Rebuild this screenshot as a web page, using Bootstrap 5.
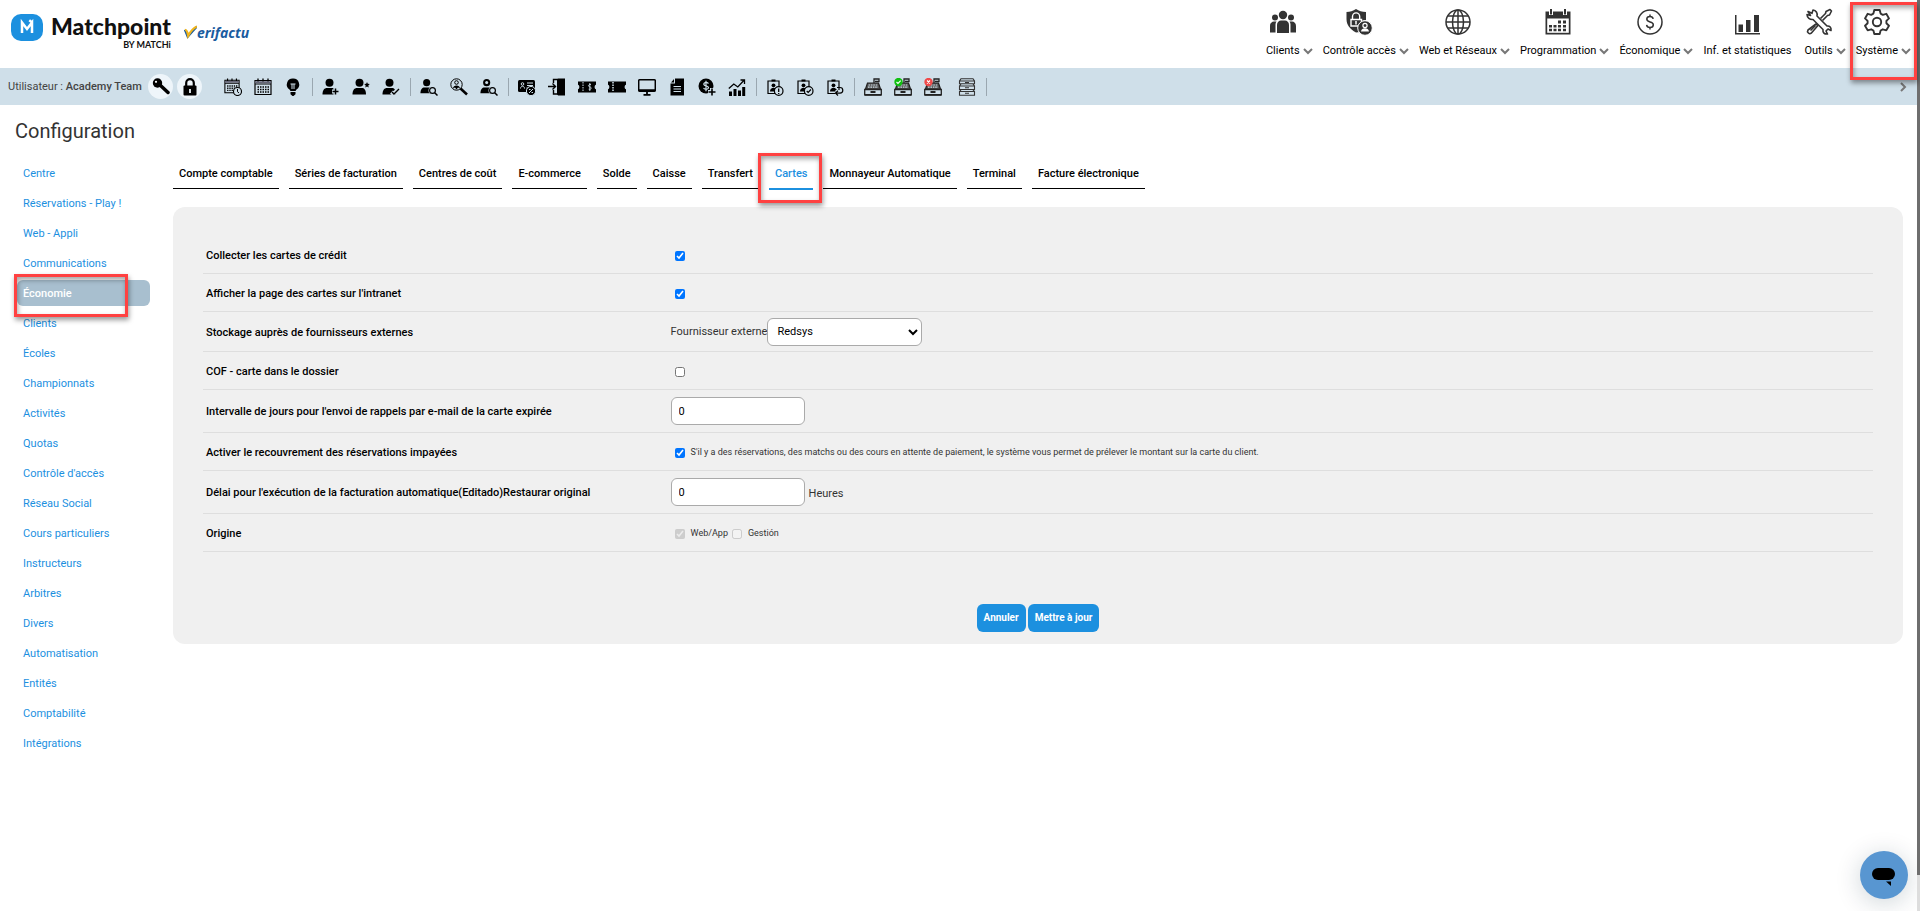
<!DOCTYPE html>
<html lang="fr">
<head>
<meta charset="utf-8">
<meta name="viewport" content="width=device-width, initial-scale=1">
<title>Matchpoint - Configuration</title>
<link href="https://cdn.jsdelivr.net/npm/bootstrap@5.3.0/dist/css/bootstrap.min.css" rel="stylesheet">
<style>
  :root { --mp-blue: #1c90df; --mp-bar: #cfdfe9; --mp-mark: #ff4141; }
  body { font-family: Roboto, "Liberation Sans", sans-serif; font-size: 11px; line-height: 16px; color: #333; background: #fff; min-height: 100vh; }
  a { text-decoration: none; }
  svg { display: block; }
  .icon-defs { position: absolute; width: 0; height: 0; }

  .top-header { height: 68px; padding: 0 9px 0 11px; }
  .brand-link { padding-top: 14px; }
  .brand-name { font: 900 23px/24px Lato, sans-serif; color: #111; }
  .brand-sub { font: 700 9px/10px Lato, sans-serif; color: #111; margin-top: 2px; }
  .verif { margin: 9px 0 0 13px; }
  .verif-word { font: italic 700 14px/20px "Open Sans", sans-serif; color: #1a5c9f; }
  .main-menu { gap: 10px; }
  .menu-entry { display: grid; grid-template-columns: auto auto; column-gap: 3px; justify-items: center; align-items: center; row-gap: 7px; color: #000; font-weight: 400; padding-top: 8px; white-space: nowrap; }
  .menu-entry .menu-icon { width: 28px; height: 28px; color: #333; grid-column: 1; grid-row: 1; }
  .menu-entry .menu-word { grid-column: 1; grid-row: 2; }
  .menu-entry .menu-chev { width: 10px; height: 7px; color: #777; grid-column: 2; grid-row: 2; }

  .tool-bar { height: 37px; background: var(--mp-bar); padding-left: 8px; padding-right: 8px; }
  .user-text { width: 136px; color: #444; white-space: nowrap; }
  .round-btn { width: 25px; height: 25px; border: 0; border-radius: 50%; background: #eef5fa; padding: 0; display: grid; place-items: center; color: #000; }
  .tool-btn { width: 30px; height: 24px; border: 0; background: none; padding: 0; display: grid; place-items: center; color: #000; }
  .tool-sep { width: 1px; height: 18px; margin: 0 3px 0 4px; background: #9aa7b0; }
  .tool-icon { width: 18px; height: 18px; }

  .page-title { font-size: 20px; line-height: 24px; font-weight: 400; color: #333; margin: 14px 0 0 15px; }
  .page-body { padding-top: 17px; }
  .side-menu { width: 150px; padding-left: 17px; gap: 4px; flex: none; }
  .side-menu .side-link { position: relative; height: 26px; padding: 6px 6px 4px; line-height: 16px; color: var(--mp-blue); border-radius: 6px; }
  .side-menu .side-link.active { background: #a8bfcf; color: #fff; font-weight: 500; }

  .main-area { margin: 0 17px 0 23px; min-width: 0; }
  .tab-strip { gap: 10px; padding-top: 6px; margin-bottom: 17px; }
  .tab-strip .tab-link { position: relative; height: 23px; padding: 0 6px; color: #000; font-weight: 500; border-bottom: 1px solid #000; white-space: nowrap; }
  .tab-strip .tab-link.active { color: var(--mp-blue); border-bottom: 2px solid var(--mp-blue); height: 24px; }

  .panel-box { background: #f0f0f0; border-radius: 12px; padding: 29px 30px 12px; }
  .set-row { min-height: 38px; border-bottom: 1px solid #dedede; }
  .set-row.mid { min-height: 40px; }
  .set-row.tall { min-height: 43px; }
  .set-label { width: 28%; padding: 2px 0 0 3px; color: #000; font-weight: 500; }
  .tick { width: 10px; height: 10px; margin: 3px 6px 0 4px; }
  .text-in { width: 134px; height: 28px; border: 1px solid #aaa; border-radius: 6px; padding: 0 7px; background: #fff; color: #000; font-size: 11px; }
  .pick { width: 155px; height: 28px; border: 1px solid #aaa; border-radius: 6px; padding: 0 5px; background: #fff; color: #000; font-size: 11px; }
  .note-text { font-size: 9px; }
  .act-btn { height: 28px; border: 0; border-radius: 6px; background: var(--mp-blue); color: #fff; font-size: 10px; font-weight: 700; padding: 0 7px; }
  .act-row { margin-top: 52px; gap: 2px; }

  .callout-box { position: absolute; border: 3px solid var(--mp-mark); box-shadow: 1px 3px 5px rgba(0,0,0,.4), inset 1px 3px 5px rgba(0,0,0,.35); pointer-events: none; z-index: 5; }
  .callout-sys { inset: 2px -6px -21px -6px; }
  .callout-side { inset: -6px 22px -11px -3px; }
  .callout-tab { inset: -13px -9px -15px -11px; }

  .chat-btn { position: fixed; right: 12px; bottom: 12px; width: 48px; height: 48px; border: 0; border-radius: 50%; background: #5896d1; padding: 0; box-shadow: 0 4px 26px rgba(0,40,60,.2); }
  .scroll-rail { position: fixed; top: 0; right: 0; bottom: 0; width: 3px; background: #ddd; z-index: 4; }
  .scroll-rail span { display: block; height: 96%; background: #6e6e6e; }
</style>
</head>
<body>
<svg class="icon-defs" aria-hidden="true">
  <defs>
    <symbol id="chev" viewBox="0 0 10 7"><path d="M1 1l4 4 4-4" fill="none" stroke="currentColor" stroke-width="2"/></symbol>
    <symbol id="m-clients" viewBox="0 0 28 28"><g fill="currentColor"><circle cx="14" cy="7" r="4.2"/><circle cx="6" cy="9.500" r="3"/><circle cx="22" cy="9.500" r="3"/><path d="M8 25v-8c0-3 2-4.500 4-4.500h4c2 0 4 1.500 4 4.500v8zM1 24.500V18c0-3 2-4.500 4-4.500h2.500C6.500 15 6.500 16 6.500 17v7.500zM27 24.500V18c0-3-2-4.500-4-4.500h-2.500c1 1.500 1 2.500 1 3.500v7.500z"/></g></symbol>
    <symbol id="m-access" viewBox="0 0 28 28"><path d="M11 1c3 2 6 3 10 3v8a7.500 7.500 0 0 0-6 12l-4 .5C5 21 1.500 17 1.500 11V4C5 4 8 3 11 1z" fill="currentColor"/><path d="M7.500 11V8.500a3.600 3.600 0 0 1 7.200 0V11M6 11.500h10.500V18H6z" fill="none" stroke="#fff" stroke-width="1.400"/><path d="M11 13v3.500" stroke="#fff" stroke-width="1.500"/><circle cx="20" cy="20" r="7.300" fill="currentColor" stroke="#fff"/><circle cx="20" cy="17.500" r="2.100" fill="none" stroke="#fff" stroke-width="1.200"/><path d="M16 23.500c.3-2.500 2-3.300 4-3.300s3.700.8 4 3.300z" fill="#fff"/></symbol>
    <symbol id="m-web" viewBox="0 0 28 28"><g fill="none" stroke="currentColor" stroke-width="1.500"><circle cx="14" cy="14" r="12"/><ellipse cx="14" cy="14" rx="5.500" ry="12"/><path d="M14 2v24M2 14h24M4 8h20M4 20h20"/></g></symbol>
    <symbol id="m-prog" viewBox="0 0 28 28"><path d="M1.500 3.500h25v23h-25z" fill="currentColor"/><path d="M3.200 10.500h21.600v14.300H3.200z" fill="#fff"/><path d="M7 1v6M21 1v6" stroke="#fff" stroke-width="4"/><path d="M7 1v5.500M21 1v5.500" stroke="currentColor" stroke-width="2"/><path d="M14 12.500h3v3h-3zM19 12.500h3v3h-3zM5 17h3v2.500H5zM9.500 17h3v2.500h-3zM14 17h3v2.500h-3zM19 17h3v2.500h-3zM5 20.700h3v2.500H5zM9.500 20.700h3v2.500h-3zM14 20.700h3v2.500h-3zM19 20.700h3v2.500h-3z" fill="currentColor"/></symbol>
    <symbol id="m-eco" viewBox="0 0 28 28"><g fill="none" stroke="currentColor" stroke-width="1.500"><circle cx="14" cy="14" r="12"/><path d="M17.200 10.800c-.3-1.500-1.500-2.300-3.200-2.300-2 0-3.200 1-3.200 2.600 0 3.900 6.500 1.800 6.500 5.600 0 1.700-1.300 2.800-3.300 2.800s-3.200-1-3.400-2.600M14 6.500v2M14 19.500v2"/></g></symbol>
    <symbol id="m-stat" viewBox="0 0 28 28"><g fill="currentColor"><path d="M2 7h1.500v18H27v1.500H2zM5.500 16.500H10V24H5.500zM13 12h4.500v12H13zM21 7h5v17h-5z"/></g></symbol>
    <symbol id="m-tools" viewBox="0 0 28 28"><g fill="none" stroke="currentColor" stroke-width="1.600" stroke-linejoin="round"><path d="M3 3.500l4 1.800 1-3.300c3 .5 4.700 3 4 6l10 10c2.700-.4 4.500 1.500 4 4.500l-3-1.500-2 2 1.500 3c-3 .4-5-1.400-4.500-4.500L8 11.500C5 12 2 9.500 2 6.500l3.500 1z"/><path d="M15.500 10.500l5-5 .5-2 4-2 1.500 1.500-2 4-2 .5-5 5M11 16l1.700 1.700-6.500 7.500c-1.800 1.500-4.700-1-3.200-3.200z"/><path d="M5.500 22.500l5-5"/></g></symbol>
    <symbol id="m-sys" viewBox="0 0 28 28"><g fill="none" stroke="currentColor" stroke-width="1.900" stroke-linejoin="round"><path d="M11.300 2h5.400l.9 3.600 2.200 1.200 3.500-1 2.700 4.600-2.600 2.500v2.300l2.600 2.500-2.700 4.600-3.500-1-2.200 1.200-.9 3.500h-5.400l-.9-3.500-2.200-1.200-3.500 1L2 17.700l2.600-2.500v-2.300L2 10.400l2.700-4.600 3.500 1 2.200-1.200z"/><circle cx="14" cy="14" r="4.200"/></g></symbol>

    <symbol id="t-key" viewBox="0 0 18 18"><circle cx="5.500" cy="5" r="4.700" fill="currentColor"/><path d="M8 7l8 7.500" stroke="currentColor" stroke-width="3.500" stroke-linecap="round"/><circle cx="4" cy="3.800" r="1.100" fill="#fff"/></symbol>
    <symbol id="t-lock" viewBox="0 0 18 18"><rect x="2.500" y="7.500" width="13" height="10" rx="1" fill="currentColor"/><path d="M5.200 8V5a3.800 3.800 0 0 1 7.600 0v3" fill="none" stroke="currentColor" stroke-width="2.200"/><path d="M9 11v4" stroke="#eef5fa" stroke-width="1.800"/></symbol>
    <symbol id="t-cal" viewBox="0 0 18 18"><path d="M1 2.500h16v14H1zM1 6h16" fill="none" stroke="currentColor" stroke-width="1.200"/><path d="M1 4.300h16" stroke="#667" stroke-width="2"/><path d="M4 .5v3M9 .5v3M14 .5v3" stroke="currentColor" stroke-width="1.300"/><path d="M3.500 9h11.500M3.500 11.500h11.500M3.500 14h11.500" stroke="currentColor" stroke-width="1.500" stroke-dasharray="1.500 1"/></symbol>
    <symbol id="t-calclock" viewBox="0 0 18 18"><use href="#t-cal" width="16" height="16"/><circle cx="13.500" cy="13.500" r="4" fill="#cfdfe9" stroke="currentColor" stroke-width="1.100"/><path d="M13.500 11v2.700l1.500 1.300" fill="none" stroke="currentColor"/></symbol>
    <symbol id="t-bulb" viewBox="0 0 18 18"><path d="M9 .5a6 6 0 0 1 3.500 11L11.500 13h-5l-1-1.500A6 6 0 0 1 9 .5zM6.500 14h5v2.200L9.500 18h-1l-2-1.800z" fill="currentColor"/><path d="M6.500 6h5M8 6v5M10 6v5" stroke="#cfdfe9" fill="none"/></symbol>
    <symbol id="t-person" viewBox="0 0 18 18"><circle cx="7.500" cy="4.700" r="4" fill="currentColor"/><path d="M.5 16.500c0-4.500 2-6.500 4.500-6.500h5c2 0 4 1.500 4 6.500z" fill="currentColor"/></symbol>
    <symbol id="t-add" viewBox="0 0 18 18"><use href="#t-person"/><path d="M13.500 10v7M10 13.500h7" stroke="#cfdfe9" stroke-width="4"/><path d="M13.500 10.500v6M10.500 13.500h6" stroke="currentColor" stroke-width="1.500"/></symbol>
    <symbol id="t-star" viewBox="0 0 18 18"><use href="#t-person"/><path d="M15 4l.8 1.800 2 .2-1.500 1.400.4 2L15 8.400l-1.700 1 .4-2L12.200 6l2-.2z" fill="currentColor"/></symbol>
    <symbol id="t-check" viewBox="0 0 18 18"><use href="#t-person"/><path d="M9.500 14l2 2 5-5" fill="none" stroke="#cfdfe9" stroke-width="4"/><path d="M10 14l2 2 5-5" fill="none" stroke="currentColor" stroke-width="1.400"/></symbol>
    <symbol id="t-psearch" viewBox="0 0 18 18"><use href="#t-person" width="16" height="17"/><circle cx="12.500" cy="12.500" r="4" fill="#cfdfe9"/><circle cx="12.500" cy="12.500" r="2.900" fill="#cfdfe9" stroke="currentColor" stroke-width="1.200"/><path d="M14.700 14.700l2.800 2.800" stroke="currentColor" stroke-width="1.500"/></symbol>
    <symbol id="t-psearch2" viewBox="0 0 18 18"><use href="#t-psearch"/><circle cx="6.700" cy="4.500" r="1.500" fill="#cfdfe9"/></symbol>
    <symbol id="t-mag" viewBox="0 0 18 18"><circle cx="6.500" cy="6.500" r="5.700" fill="none" stroke="currentColor"/><circle cx="6.500" cy="4.500" r="1.800" fill="none" stroke="currentColor"/><path d="M3 10.500c0-4 7-4 7 0l-2-1-1.500 2L5 9.500z" fill="currentColor"/><path d="M10.500 10.500l6.500 6" stroke="currentColor" stroke-width="2.500"/></symbol>
    <symbol id="t-card" viewBox="0 0 18 18"><rect x="0" y="2" width="17" height="12" rx="1.500" fill="currentColor"/><circle cx="4.500" cy="6" r="1.300" fill="none" stroke="#cfdfe9"/><path d="M2.500 10.500c0-3 4-3 4 0M9 5h6M9 7.500h6M8.500 10h3" stroke="#cfdfe9" fill="none"/><circle cx="13" cy="13" r="4.600" fill="currentColor" stroke="#cfdfe9"/><path d="M11 15l4-4M11 11.500h1.500M13.500 14.500H15" stroke="#cfdfe9"/></symbol>
    <symbol id="t-exit" viewBox="0 0 18 18"><path d="M10 .5h7v17h-7l-1-1.500V2z" fill="currentColor"/><path d="M10 1.500H5.500V5M5.500 12v4H10M0 8.500h7M4.500 5.500l3 3-3 3" fill="none" stroke="currentColor" stroke-width="1.400"/></symbol>
    <symbol id="t-tick1" viewBox="0 0 18 18"><path d="M0 3.500h18v3.300c-1.800.5-1.800 4 0 4.500v3.200H0v-3.200c1.800-.5 1.800-4 0-4.500z" fill="currentColor"/><path d="M5 4v10" stroke="#cfdfe9" stroke-dasharray="1.500 1"/><path d="M13 6.500c-3-.6-3 2-1.500 2.300 2.500.4 2.300 3-.8 2.400M11.800 5v8" stroke="#cfdfe9" fill="none" stroke-width=".9"/></symbol>
    <symbol id="t-tick2" viewBox="0 0 18 18"><path d="M0 3.500h18v3.300c-1.800.5-1.800 4 0 4.500v3.200H0v-3.200c1.800-.5 1.800-4 0-4.500z" fill="currentColor"/><path d="M5 4v10" stroke="#cfdfe9" stroke-width="1.500" stroke-dasharray="1.500 1"/></symbol>
    <symbol id="t-mon" viewBox="0 0 18 18"><rect x=".7" y="1.700" width="16.600" height="11.500" rx="1" fill="none" stroke="currentColor" stroke-width="1.500"/><path d="M1 12.200h16M9 13v3M5.500 16.800h7" stroke="currentColor" stroke-width="1.800"/></symbol>
    <symbol id="t-doc" viewBox="0 0 18 18"><path d="M7 .5h9v17H2.500V5.500H7zM6 1L3 4.500h3z" fill="currentColor"/><path d="M5.500 8.500h7.500M5.500 11h7.500M5.500 13.500h7.500" stroke="#cfdfe9"/></symbol>
    <symbol id="t-coin" viewBox="0 0 18 18"><circle cx="8" cy="8" r="7.500" fill="currentColor"/><path d="M10.500 5.500C8 3.500 5.500 4.700 5.800 6.300c.4 2 4.600 1 4.700 3.300 0 1.800-3 2.300-5 .7M8 2.800v10.400" stroke="#cfdfe9" fill="none" stroke-width="1.200"/><path d="M14 10v8M10 14h8" stroke="#cfdfe9" stroke-width="4"/><path d="M14 10.500v7M10.500 14h7" stroke="currentColor" stroke-width="1.600"/></symbol>
    <symbol id="t-graph" viewBox="0 0 18 18"><path d="M1 13.500h3V18H1zM5.500 11h3v7h-3zM10 12.500h3V18h-3zM14.200 9h3v9h-3z" fill="currentColor"/><path d="M.8 10.500l5-4.500 4 3 6-6.500M12.500 2H16.500v4" fill="none" stroke="currentColor" stroke-width="1.300"/></symbol>
    <symbol id="t-badge" viewBox="0 0 18 18"><path d="M2 3h11v12.500H2z" fill="none" stroke="currentColor" stroke-width="1.200"/><path d="M5.500 1.500h4v2h-4z" fill="currentColor"/><circle cx="7.500" cy="7.300" r="1.900" fill="currentColor"/><path d="M4 13.500c0-5 7-5 7 0z" fill="currentColor"/></symbol>
    <symbol id="t-b1" viewBox="0 0 18 18"><use href="#t-badge"/><circle cx="12.700" cy="13" r="4.300" fill="#cfdfe9" stroke="currentColor" stroke-width="1.200"/><path d="M12.700 10.500v3.500M12.700 15v1" stroke="currentColor" stroke-width="1.300"/></symbol>
    <symbol id="t-b2" viewBox="0 0 18 18"><use href="#t-badge"/><circle cx="12.700" cy="13" r="4.300" fill="#cfdfe9" stroke="currentColor" stroke-width="1.200"/><path d="M10.700 13l1.500 1.500 2.700-3" fill="none" stroke="currentColor" stroke-width="1.200"/></symbol>
    <symbol id="t-b3" viewBox="0 0 18 18"><use href="#t-badge"/><path d="M9.500 12h7v4h-7z" fill="#cfdfe9"/><path d="M11 9.500h3a2.800 2.800 0 0 1 0 5.600h-4M12 12.700l-2.500 2.400 2.500 2.400" fill="none" stroke="currentColor" stroke-width="1.200"/></symbol>
    <symbol id="t-cash" viewBox="0 0 18 18"><path d="M.7 11.500h16.600v5.300H.7z" fill="none" stroke="#222" stroke-width="1.300"/><path d="M1.500 11l2-6h11l2 6z" fill="#555" stroke="#222" stroke-width="1.200"/><path d="M10 5V1h5v2.500h-4" fill="none" stroke="#222" stroke-width="1.300"/><path d="M4.500 7h9M4 9.200h10" stroke="#cfdfe9" stroke-width="1.200" stroke-dasharray="1.600 .8"/><path d="M.7 16.800h16.600M6.500 14h5" stroke="#222" stroke-width="1.800"/></symbol>
    <symbol id="t-cashok" viewBox="0 0 18 18"><use href="#t-cash"/><circle cx="4.500" cy="4" r="4.200" fill="#10c010"/><path d="M2.500 4l1.500 1.500L6.700 2.700" fill="none" stroke="#fff" stroke-width="1.100"/></symbol>
    <symbol id="t-cashno" viewBox="0 0 18 18"><use href="#t-cash"/><circle cx="4.500" cy="4" r="4.200" fill="#f04a4a"/><path d="M3 2.500l3 3M6 2.500l-3 3" stroke="#fff" stroke-width="1.100"/></symbol>
    <symbol id="t-draw" viewBox="0 0 18 18"><g fill="none" stroke="#333" stroke-width="1.100"><path d="M3 .7h12L16.500 3v2.700h-15V3zM1.500 3h15M3 6l-1.500 2v3.500h15V8L15 6M1.500 8h15M3 11.800L1.500 13.500v3.800h15v-3.800L15 11.800M1.500 13.500h15"/><path d="M7 4.500h4M7 9.700h4M7 15.200h4"/></g></symbol>
  </defs>
</svg>

<header class="top-header d-flex justify-content-between">
  <a href="#" class="brand-link d-flex align-items-start" aria-label="Matchpoint by Matchi">
    <svg class="me-2" width="32" height="28" viewBox="0 0 32 28"><rect width="32" height="27" rx="10" fill="#1c90df"/><path d="M11 19V8.500l5 6.500 5-6.500V19M18.500 8L20 6" fill="none" stroke="#fff" stroke-width="2.500"/></svg>
    <span class="d-flex flex-column align-items-end"><span class="brand-name">Matchpoint</span><span class="brand-sub">BY MATCHi</span></span>
    <span class="verif d-flex">
      <svg width="13" height="17" viewBox="0 0 14 20" preserveAspectRatio="none"><path d="M1 8l3 8L14 4" fill="none" stroke="#1a5c9f" stroke-width="2.500"/><path d="M1 8c2 0 3 4 3.500 7C7 10 10 6 14 4" fill="none" stroke="#f0b41c" stroke-width="2.500"/></svg>
      <span class="verif-word">erifactu</span>
    </span>
  </a>
  <nav class="main-menu d-flex align-items-start" aria-label="Menu principal">
    <a href="#" class="menu-entry"><svg class="menu-icon"><use href="#m-clients"/></svg><span class="menu-word">Clients</span><svg class="menu-chev"><use href="#chev"/></svg></a>
    <a href="#" class="menu-entry"><svg class="menu-icon"><use href="#m-access"/></svg><span class="menu-word">Contrôle accès</span><svg class="menu-chev"><use href="#chev"/></svg></a>
    <a href="#" class="menu-entry"><svg class="menu-icon"><use href="#m-web"/></svg><span class="menu-word">Web et Réseaux</span><svg class="menu-chev"><use href="#chev"/></svg></a>
    <a href="#" class="menu-entry"><svg class="menu-icon"><use href="#m-prog"/></svg><span class="menu-word">Programmation</span><svg class="menu-chev"><use href="#chev"/></svg></a>
    <a href="#" class="menu-entry"><svg class="menu-icon"><use href="#m-eco"/></svg><span class="menu-word">Économique</span><svg class="menu-chev"><use href="#chev"/></svg></a>
    <a href="#" class="menu-entry"><svg class="menu-icon"><use href="#m-stat"/></svg><span class="menu-word">Inf. et statistiques</span></a>
    <a href="#" class="menu-entry"><svg class="menu-icon"><use href="#m-tools"/></svg><span class="menu-word">Outils</span><svg class="menu-chev"><use href="#chev"/></svg></a>
    <a href="#" class="menu-entry position-relative"><svg class="menu-icon"><use href="#m-sys"/></svg><span class="menu-word">Système</span><svg class="menu-chev"><use href="#chev"/></svg><i class="callout-box callout-sys"></i></a>
  </nav>
</header>

<div class="tool-bar d-flex align-items-center">
  <div class="user-text">Utilisateur : <span class="fw-medium">Academy Team</span></div>
  <button class="round-btn ms-1" aria-label="Clé"><svg class="tool-icon"><use href="#t-key"/></svg></button>
  <button class="round-btn ms-1 me-3" aria-label="Verrou"><svg class="tool-icon"><use href="#t-lock"/></svg></button>
  <button class="tool-btn" aria-label="Réservations"><svg class="tool-icon"><use href="#t-calclock"/></svg></button>
  <button class="tool-btn" aria-label="Calendrier"><svg class="tool-icon"><use href="#t-cal"/></svg></button>
  <button class="tool-btn" aria-label="Lumières"><svg class="tool-icon"><use href="#t-bulb"/></svg></button>
  <span class="tool-sep"></span>
  <button class="tool-btn" aria-label="Nouveau client"><svg class="tool-icon"><use href="#t-add"/></svg></button>
  <button class="tool-btn" aria-label="Client favori"><svg class="tool-icon"><use href="#t-star"/></svg></button>
  <button class="tool-btn" aria-label="Client validé"><svg class="tool-icon"><use href="#t-check"/></svg></button>
  <span class="tool-sep"></span>
  <button class="tool-btn" aria-label="Chercher un client"><svg class="tool-icon"><use href="#t-psearch"/></svg></button>
  <button class="tool-btn" aria-label="Recherche"><svg class="tool-icon"><use href="#t-mag"/></svg></button>
  <button class="tool-btn" aria-label="Chercher un contact"><svg class="tool-icon"><use href="#t-psearch2"/></svg></button>
  <span class="tool-sep"></span>
  <button class="tool-btn" aria-label="Carte"><svg class="tool-icon"><use href="#t-card"/></svg></button>
  <button class="tool-btn" aria-label="Entrée"><svg class="tool-icon"><use href="#t-exit"/></svg></button>
  <button class="tool-btn" aria-label="Bon payant"><svg class="tool-icon"><use href="#t-tick1"/></svg></button>
  <button class="tool-btn" aria-label="Bon"><svg class="tool-icon"><use href="#t-tick2"/></svg></button>
  <button class="tool-btn" aria-label="Écran"><svg class="tool-icon"><use href="#t-mon"/></svg></button>
  <button class="tool-btn" aria-label="Document"><svg class="tool-icon"><use href="#t-doc"/></svg></button>
  <button class="tool-btn" aria-label="Paiement"><svg class="tool-icon"><use href="#t-coin"/></svg></button>
  <button class="tool-btn" aria-label="Statistiques"><svg class="tool-icon"><use href="#t-graph"/></svg></button>
  <span class="tool-sep"></span>
  <button class="tool-btn" aria-label="Alerte"><svg class="tool-icon"><use href="#t-b1"/></svg></button>
  <button class="tool-btn" aria-label="Validation"><svg class="tool-icon"><use href="#t-b2"/></svg></button>
  <button class="tool-btn" aria-label="Retour"><svg class="tool-icon"><use href="#t-b3"/></svg></button>
  <span class="tool-sep"></span>
  <button class="tool-btn" aria-label="Caisse"><svg class="tool-icon"><use href="#t-cash"/></svg></button>
  <button class="tool-btn" aria-label="Ouvrir la caisse"><svg class="tool-icon"><use href="#t-cashok"/></svg></button>
  <button class="tool-btn me-1" aria-label="Fermer la caisse"><svg class="tool-icon"><use href="#t-cashno"/></svg></button>
  <button class="tool-btn" aria-label="Tiroirs"><svg class="tool-icon"><use href="#t-draw"/></svg></button>
  <span class="tool-sep"></span>
  <button class="border-0 bg-transparent p-0 ms-auto me-1" aria-label="Suivant"><svg width="8" height="10" viewBox="0 0 8 10"><path d="M1 1l4 4-4 4" fill="none" stroke="#777" stroke-width="2"/></svg></button>
</div>

<h1 class="page-title">Configuration</h1>

<div class="page-body d-flex">
  <nav class="side-menu d-flex flex-column" aria-label="Configuration">
    <a href="#" class="side-link">Centre</a>
    <a href="#" class="side-link">Réservations - Play !</a>
    <a href="#" class="side-link">Web - Appli</a>
    <a href="#" class="side-link">Communications</a>
    <a href="#" class="side-link active" aria-current="page">Économie<i class="callout-box callout-side"></i></a>
    <a href="#" class="side-link">Clients</a>
    <a href="#" class="side-link">Écoles</a>
    <a href="#" class="side-link">Championnats</a>
    <a href="#" class="side-link">Activités</a>
    <a href="#" class="side-link">Quotas</a>
    <a href="#" class="side-link">Contrôle d'accès</a>
    <a href="#" class="side-link">Réseau Social</a>
    <a href="#" class="side-link">Cours particuliers</a>
    <a href="#" class="side-link">Instructeurs</a>
    <a href="#" class="side-link">Arbitres</a>
    <a href="#" class="side-link">Divers</a>
    <a href="#" class="side-link">Automatisation</a>
    <a href="#" class="side-link">Entités</a>
    <a href="#" class="side-link">Comptabilité</a>
    <a href="#" class="side-link">Intégrations</a>
  </nav>

  <main class="main-area flex-grow-1">
    <nav class="tab-strip d-flex align-items-start" aria-label="Économie">
      <a href="#" class="tab-link">Compte comptable</a>
      <a href="#" class="tab-link">Séries de facturation</a>
      <a href="#" class="tab-link">Centres de coût</a>
      <a href="#" class="tab-link">E-commerce</a>
      <a href="#" class="tab-link">Solde</a>
      <a href="#" class="tab-link">Caisse</a>
      <a href="#" class="tab-link">Transfert</a>
      <a href="#" class="tab-link active" aria-current="page">Cartes<i class="callout-box callout-tab"></i></a>
      <a href="#" class="tab-link">Monnayeur Automatique</a>
      <a href="#" class="tab-link">Terminal</a>
      <a href="#" class="tab-link">Facture électronique</a>
    </nav>

    <form class="panel-box">
      <div class="set-row d-flex align-items-center"><label class="set-label" for="f1">Collecter les cartes de crédit</label><input class="tick" type="checkbox" id="f1" checked></div>
      <div class="set-row d-flex align-items-center"><label class="set-label" for="f2">Afficher la page des cartes sur l'intranet</label><input class="tick" type="checkbox" id="f2" checked></div>
      <div class="set-row mid d-flex align-items-center"><span class="set-label">Stockage auprès de fournisseurs externes</span><label for="f3">Fournisseur externe</label><select class="pick" id="f3"><option>Redsys</option></select></div>
      <div class="set-row d-flex align-items-center"><label class="set-label" for="f4">COF - carte dans le dossier</label><input class="tick" type="checkbox" id="f4"></div>
      <div class="set-row tall d-flex align-items-center"><label class="set-label" for="f5">Intervalle de jours pour l'envoi de rappels par e-mail de la carte expirée</label><input class="text-in" type="text" id="f5" value="0"></div>
      <div class="set-row d-flex align-items-center"><span class="set-label">Activer le recouvrement des réservations impayées</span><input class="tick" type="checkbox" id="f6" checked><label class="note-text" for="f6">S'il y a des réservations, des matchs ou des cours en attente de paiement, le système vous permet de prélever le montant sur la carte du client.</label></div>
      <div class="set-row tall d-flex align-items-center"><label class="set-label" for="f7">Délai pour l'exécution de la facturation automatique(Editado)Restaurar original</label><input class="text-in" type="text" id="f7" value="0"><span class="ms-1 pt-1">Heures</span></div>
      <div class="set-row d-flex align-items-center"><span class="set-label">Origine</span><input class="tick" type="checkbox" id="f8" checked disabled><label class="note-text" for="f8">Web/App</label><input class="tick" type="checkbox" id="f9" disabled><label class="note-text" for="f9">Gestión</label></div>
      <div class="act-row d-flex justify-content-center">
        <button type="button" class="act-btn">Annuler</button>
        <button type="submit" class="act-btn">Mettre à jour</button>
      </div>
    </form>
  </main>
</div>

<button class="chat-btn" aria-label="Discussion"><svg width="48" height="48" viewBox="0 0 48 48"><rect x="12" y="17" width="23" height="12" rx="6"/><path d="M26 30.500h5v4.500z"/></svg></button>
<div class="scroll-rail"><span></span></div>
<script src="https://cdn.jsdelivr.net/npm/bootstrap@5.3.0/dist/js/bootstrap.bundle.min.js"></script>
</body>
</html>
